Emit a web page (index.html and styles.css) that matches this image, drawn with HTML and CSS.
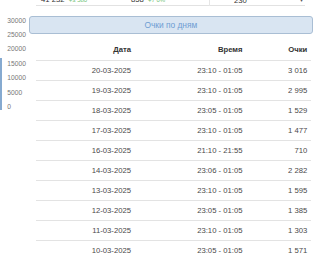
FILE: index.html
```html
<!DOCTYPE html>
<html lang="ru">
<head>
<meta charset="utf-8">
<title>Очки по дням</title>
<link rel="stylesheet" href="styles.css">
</head>
<body>
<div class="strip">
  <div class="strip-row">
    <span class="s-c1">41 232 <em class="up">+3 580</em></span>
    <span class="s-c2">858 <em class="up">+7 0%</em></span>
    <span class="s-c3">230</span>
    <span class="s-c4">▾</span>
  </div>
</div>
<div class="main">
  <div class="axis">
    <span class="bar"></span>
    <div class="tick">30000</div>
    <div class="tick">25000</div>
    <div class="tick">20000</div>
    <div class="tick">15000</div>
    <div class="tick">10000</div>
    <div class="tick">5000</div>
    <div class="tick">0</div>
  </div>
  <div class="content">
    <div class="btn">Очки по дням</div>
    <div class="table">
      <div class="row head"><div>Дата</div><div>Время</div><div>Очки</div></div>
      <div class="row"><div>20-03-2025</div><div>23:10 - 01:05</div><div>3 016</div></div>
      <div class="row"><div>19-03-2025</div><div>23:10 - 01:05</div><div>2 995</div></div>
      <div class="row"><div>18-03-2025</div><div>23:05 - 01:05</div><div>1 529</div></div>
      <div class="row"><div>17-03-2025</div><div>23:10 - 01:05</div><div>1 477</div></div>
      <div class="row"><div>16-03-2025</div><div>21:10 - 21:55</div><div>710</div></div>
      <div class="row"><div>14-03-2025</div><div>23:06 - 01:05</div><div>2 282</div></div>
      <div class="row"><div>13-03-2025</div><div>23:10 - 01:05</div><div>1 595</div></div>
      <div class="row"><div>12-03-2025</div><div>23:05 - 01:05</div><div>1 385</div></div>
      <div class="row"><div>11-03-2025</div><div>23:10 - 01:05</div><div>1 303</div></div>
      <div class="row"><div>10-03-2025</div><div>23:05 - 01:05</div><div>1 571</div></div>
    </div>
  </div>
</div>
</body>
</html>
```

FILE: styles.css
```css
* { box-sizing: border-box; }
html, body {
  margin: 0;
  padding: 0;
  background: #fff;
}
body {
  width: 320px;
  height: 258px;
  overflow: hidden;
  font-family: "Liberation Sans", Arial, sans-serif;
  font-size: 7.7px;
  color: #444;
}
.strip {
  height: 6px;
  display: flow-root;
}
.strip-row {
  margin: -6px 15px 0 36px;
  height: 12px;
  border-bottom: 1px solid #e2e2e2;
  display: grid;
  grid-template-columns: 90px 83px 82px 1fr;
  align-items: center;
  line-height: 11px;
  color: #333;
}
.strip-row em {
  font-style: normal;
  font-size: 6px;
  color: #6fbf73;
  margin-left: 2px;
}
.s-c1 { padding-left: 5px; }
.s-c2 { padding-left: 5px; }
.s-c3 { padding-left: 24px; border-left: 1px solid #e6e6e6; }
.s-c4 { text-align: right; padding-right: 2px; color: #555; font-size: 6px; }

.main {
  display: flex;
}
.axis {
  position: relative;
  width: 29px;
  flex: none;
  padding-top: 7.6px;
  padding-left: 7.3px;
  font-size: 6.7px;
  color: #777;
}
.tick {
  line-height: 14.4px;
  height: 14.4px;
}
.bar {
  position: absolute;
  left: 0;
  top: 52px;
  width: 2px;
  height: 52px;
  background: #86aad0;
}
.content {
  flex: 1;
  min-width: 0;
  padding-right: 7.3px;
}
.btn {
  margin-top: 9.7px;
  height: 18px;
  border: 1px solid #a9bed4;
  border-radius: 3px;
  background: #d9e5f2;
  color: #6f9dd2;
  font-size: 8.4px;
  line-height: 16px;
  text-align: center;
}
.table {
  margin: 6.3px 1.4px 0 7px;
}
.row {
  display: grid;
  grid-template-columns: 99px 111.5px 1fr;
  height: 20px;
  border-top: 1px solid #e3e3e3;
  align-items: center;
  color: #4a4a4a;
}
.row > div {
  text-align: right;
  padding-right: 4px;
  white-space: nowrap;
}
.row.head {
  border-top: none;
  font-weight: bold;
  color: #333;
  padding-bottom: 1px;
}
```
